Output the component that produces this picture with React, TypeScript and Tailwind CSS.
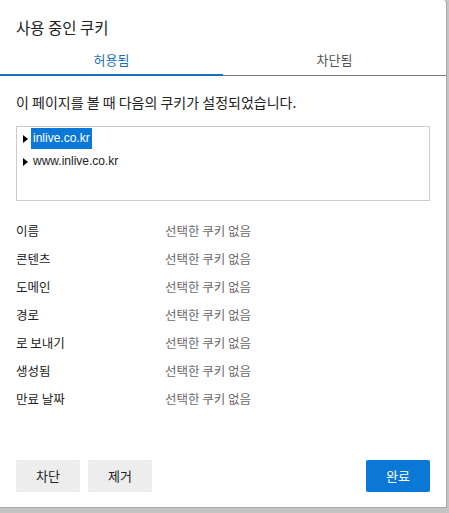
import { useState } from 'react';

const fields = ['이름', '콘텐츠', '도메인', '경로', '로 보내기', '생성됨', '만료 날짜'];

const sites = ['inlive.co.kr', 'www.inlive.co.kr'];

function Caret() {
    return (
        <svg width="5" height="8" viewBox="0 0 5 8" className="shrink-0">
            <path d="M0 0 L5 4 L0 8 Z" fill="#000" />
        </svg>
    );
}

export default function App() {
    const [tab, setTab] = useState<'allowed' | 'blocked'>('allowed');
    const [selected, setSelected] = useState(0);

    return (
        <div
            className="w-[449px] h-[513px] bg-[#c4c4c4] overflow-hidden"
            style={{ fontFamily: '"Noto Sans CJK KR", "Noto Sans", sans-serif' }}
        >
            <div className="w-[447px] h-[508px] bg-white rounded-tr-[4px] border-r border-b border-[#a8a8a8] flex flex-col">
                <h2 className="px-4 pt-[16px] h-[46px] text-[15.5px] leading-[22px] text-[#222]">사용 중인 쿠키</h2>

                <div className="flex h-[30px]">
                    <button
                        onClick={() => setTab('allowed')}
                        className={
                            tab === 'allowed'
                                ? 'flex-1 text-[13px] text-[#1b6fbf] border-b-2 border-[#1b6fbf]'
                                : 'flex-1 text-[13px] text-[#555] border-b border-[#777] pb-px'
                        }
                    >
                        허용됨
                    </button>
                    <button
                        onClick={() => setTab('blocked')}
                        className={
                            tab === 'blocked'
                                ? 'flex-1 text-[13px] text-[#1b6fbf] border-b-2 border-[#1b6fbf]'
                                : 'flex-1 text-[13px] text-[#555] border-b border-[#777] pb-px'
                        }
                    >
                        차단됨
                    </button>
                </div>

                <p className="px-4 pt-[16px] text-[14px] leading-[21px] text-[#222]">
                    이 페이지를 볼 때 다음의 쿠키가 설정되었습니다.
                </p>

                <div className="mx-4 mt-[13px] h-[75px] border border-[#cccccc] px-[6px]">
                    {sites.map((s, i) => (
                        <div
                            key={s}
                            onClick={() => setSelected(i)}
                            className="flex items-center gap-[3px] h-[23px]"
                        >
                            <Caret />
                            <span
                                className={
                                    selected === i
                                        ? 'bg-[#0a78d7] text-white px-[2px] h-[21px] leading-[21px] text-[12px]'
                                        : 'text-[#222] px-[2px] h-[21px] leading-[21px] text-[12px]'
                                }
                                style={{ fontFamily: '"Liberation Sans", Arial, sans-serif' }}
                            >
                                {s}
                            </span>
                        </div>
                    ))}
                </div>

                <div className="px-4 pt-[16px] flex flex-col">
                    {fields.map((f) => (
                        <div key={f} className="flex h-[28px] items-center text-[12.5px]">
                            <span className="w-[149px] text-[#222]">{f}</span>
                            <span className="text-[#6b6b6b]">선택한 쿠키 없음</span>
                        </div>
                    ))}
                </div>

                <div className="mt-auto px-4 pb-[15px] flex items-center">
                    <button className="w-[64px] h-[32px] rounded-[2px] bg-[#ededed] text-[13px] text-[#222]">차단</button>
                    <button className="ml-2 w-[64px] h-[32px] rounded-[2px] bg-[#ededed] text-[13px] text-[#222]">제거</button>
                    <button className="ml-auto w-[64px] h-[32px] rounded-[2px] bg-[#0a78d4] text-[13px] text-white">완료</button>
                </div>
            </div>
        </div>
    );
}
